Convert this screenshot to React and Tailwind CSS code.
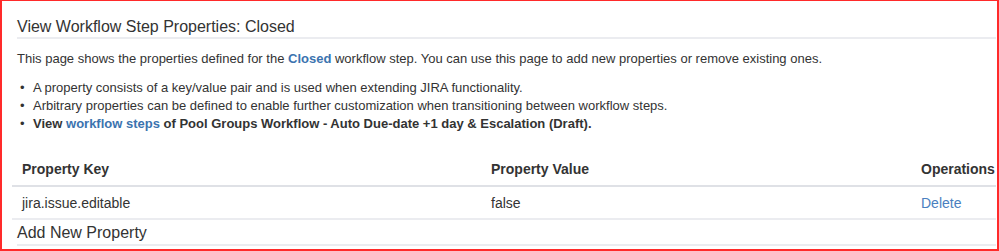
export default function App() {
  return (
    <div className="w-[999px] h-[251px] bg-white border-l-2 border-t border-r-2 border-b-2 border-[#ff2a2a] overflow-hidden text-[#333333]" style={{ fontFamily: '"Liberation Sans", Arial, sans-serif' }}>
      <div className="pl-[15px] pr-[1px]">
        <h2 className="pt-[16px] pb-0 text-[16px] leading-[20px] font-normal border-b-2 border-[#ebecf0]">View Workflow Step Properties: Closed</h2>
        <p className="mt-[11px] text-[13px] leading-[18px]">
          This page shows the properties defined for the <b className="text-[#3b73af]">Closed</b> workflow step. You can use this page to add new properties or remove existing ones.
        </p>
        <ul className="mt-[11px] text-[13px] leading-[18px]">
          <li className="flex"><span className="w-[16px] pl-[3px]">•</span>A property consists of a key/value pair and is used when extending JIRA functionality.</li>
          <li className="flex"><span className="w-[16px] pl-[3px]">•</span>Arbitrary properties can be defined to enable further customization when transitioning between workflow steps.</li>
          <li className="flex font-bold"><span className="w-[16px] pl-[3px] font-normal">•</span><span>View <a className="text-[#3b73af]">workflow steps</a> of Pool Groups Workflow - Auto Due-date +1 day &amp; Escalation (Draft).</span></li>
        </ul>
        <table className="mt-[20px] -ml-[5px] w-[984px] table-fixed text-[14px] leading-[20px] border-collapse">
          <thead>
            <tr className="border-b-2 border-[#dfe1e6]">
              <th className="text-left font-bold pl-[10px] pt-[6px] pb-[6px] w-[469px]">Property Key</th>
              <th className="text-left font-bold pl-[10px] w-[430px]">Property Value</th>
              <th className="text-left font-bold pl-[10px] whitespace-nowrap">Operations</th>
            </tr>
          </thead>
          <tbody>
            <tr className="border-b-2 border-[#ebecf0]">
              <td className="pl-[10px] pt-[6px] pb-[5px]">jira.issue.editable</td>
              <td className="pl-[10px]">false</td>
              <td className="pl-[10px]"><a className="text-[#4a7fc0]">Delete</a></td>
            </tr>
          </tbody>
        </table>
        <h3 className="text-[16px] leading-[20px] pt-[3px] pb-[1px] border-b-2 border-[#ebecf0]">Add New Property</h3>
      </div>
    </div>
  );
}
